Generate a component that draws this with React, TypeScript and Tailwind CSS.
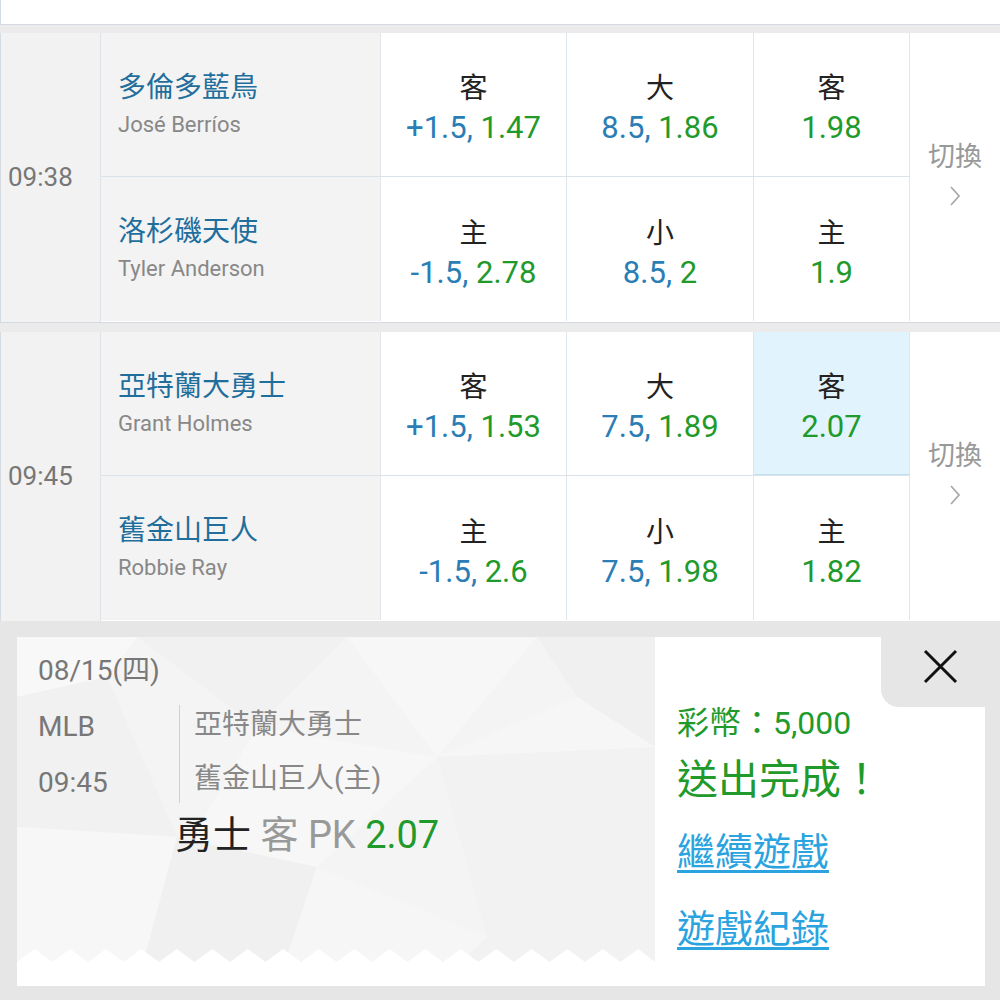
const font = { fontFamily: 'Roboto, "Noto Sans CJK TC", sans-serif' };

type Odd = { label: string; line?: string; odd: string; active?: boolean };
type Team = { name: string; player: string; odds: Odd[] };
type Game = { time: string; teams: Team[] };

const games: Game[] = [
  {
    time: "09:38",
    teams: [
      {
        name: "多倫多藍鳥",
        player: "José Berríos",
        odds: [
          { label: "客", line: "+1.5", odd: "1.47" },
          { label: "大", line: "8.5", odd: "1.86" },
          { label: "客", odd: "1.98" },
        ],
      },
      {
        name: "洛杉磯天使",
        player: "Tyler Anderson",
        odds: [
          { label: "主", line: "-1.5", odd: "2.78" },
          { label: "小", line: "8.5", odd: "2" },
          { label: "主", odd: "1.9" },
        ],
      },
    ],
  },
  {
    time: "09:45",
    teams: [
      {
        name: "亞特蘭大勇士",
        player: "Grant Holmes",
        odds: [
          { label: "客", line: "+1.5", odd: "1.53" },
          { label: "大", line: "7.5", odd: "1.89" },
          { label: "客", odd: "2.07", active: true },
        ],
      },
      {
        name: "舊金山巨人",
        player: "Robbie Ray",
        odds: [
          { label: "主", line: "-1.5", odd: "2.6" },
          { label: "小", line: "7.5", odd: "1.98" },
          { label: "主", odd: "1.82" },
        ],
      },
    ],
  },
];

const oddWidths = ["w-[186px]", "w-[187px]", "w-[156px]"];

function OddCell({ o, i }: { o: Odd; i: number }) {
  return (
    <div
      className={`${oddWidths[i]} flex flex-col items-center justify-center pt-[9px] border-r border-[#dfe6eb] ${
        o.active ? "bg-[#e1f3fd] border-b border-b-[#c3dfee]" : "bg-white"
      }`}
    >
      <div className="text-[28px] leading-[36px] text-[#222]">{o.label}</div>
      <div className="text-[31px] leading-[38px] mt-[2px]">
        {o.line && <span className="text-[#2a7db5]">{o.line}, </span>}
        <span className="text-[#1f9a2b]">{o.odd}</span>
      </div>
    </div>
  );
}

function GameBlock({ g }: { g: Game }) {
  return (
    <div className="flex h-[289px] border-l border-[#d5dde3]">
      <div className="w-[100px] bg-[#f2f2f2] border-r border-[#dde3e8] flex items-center pl-[7px]">
        <span className="text-[26px] text-[#777]">{g.time}</span>
      </div>
      <div className="flex flex-col">
        {g.teams.map((t, idx) => (
          <div
            key={t.name}
            className={`flex h-[144px] ${idx === 0 ? "border-b border-[#dbe3e9]" : ""}`}
          >
            <div className="w-[280px] bg-[#f3f3f3] border-r border-[#e2e6ea] flex flex-col justify-center pl-[17px]">
              <div className="text-[28px] leading-[36px] text-[#1f6e9c]">{t.name}</div>
              <div className="text-[22px] leading-[30px] text-[#888] mt-[4px]">{t.player}</div>
            </div>
            {t.odds.map((o, i) => (
              <OddCell key={i} o={o} i={i} />
            ))}
          </div>
        ))}
      </div>
      <div className="flex-1 bg-white flex flex-col items-center justify-center pb-[8px]">
        <span className="text-[27px] leading-[32px] text-[#999]">切換</span>
        <svg width="14" height="22" viewBox="0 0 14 22" className="mt-[12px]">
          <path d="M3 2 L11 11 L3 20" fill="none" stroke="#aaa" strokeWidth="1.8" />
        </svg>
      </div>
    </div>
  );
}

function Texture() {
  return (
    <svg className="absolute inset-0" width="638" height="349" viewBox="0 0 638 349">
      <rect width="638" height="349" fill="#f4f4f4" />
      <polygon points="0,0 120,0 90,40 0,60" fill="#f8f8f8" />
      <polygon points="120,0 330,0 240,90" fill="#f1f1f1" />
      <polygon points="330,0 520,0 420,120" fill="#f7f7f7" />
      <polygon points="520,0 638,0 638,110 560,60" fill="#f0f0f0" />
      <polygon points="0,60 90,40 160,200 0,190" fill="#f1f1f1" />
      <polygon points="240,90 420,120 300,230 170,210" fill="#f7f7f7" />
      <polygon points="420,120 638,110 638,260 470,300" fill="#f2f2f2" />
      <polygon points="0,190 160,200 120,349 0,349" fill="#f7f7f7" />
      <polygon points="160,200 300,230 260,349 120,349" fill="#f0f0f0" />
      <polygon points="300,230 470,300 420,349 260,349" fill="#f6f6f6" />
      <polygon points="470,300 638,260 638,349 420,349" fill="#f2f2f2" />
      <polygon points="560,60 638,110 420,120" fill="#f6f6f6" />
    </svg>
  );
}

function Zigzag() {
  const pts: string[] = ["0,28"];
  for (let x = 0; x <= 638; x += 35.5) {
    pts.push(`${x},13`);
    pts.push(`${x + 17.75},0`);
  }
  pts.push("638,13", "638,28");
  return (
    <svg className="absolute left-0 bottom-0" width="638" height="37" viewBox="0 0 638 37">
      <rect x="0" y="13" width="638" height="24" fill="#ffffff" />
      <polygon points={pts.join(" ")} fill="#ffffff" />
    </svg>
  );
}

export default function App() {
  return (
    <div className="w-[1000px] h-[1000px] bg-white overflow-hidden" style={font}>
      <div className="h-[24px] border-l border-[#d5dde3] bg-white" />
      <div className="h-[9px] border-t border-[#d4dadf] bg-[#ebebeb]" />
      <GameBlock g={games[0]} />
      <div className="h-[10px] border-t border-[#d4dadf] bg-[#ebebeb]" />
      <GameBlock g={games[1]} />

      <div className="bg-[#e6e6e6] h-[380px] pt-[16px] pl-[17px] pr-[15px]">
        <div className="relative flex h-[349px] bg-white">
          <div className="relative w-[638px] h-full overflow-hidden">
            <Texture />
            <Zigzag />
            <div className="relative pl-[21px] pt-[16px] text-[#777]">
              <div className="text-[28px] leading-[36px]">08/15(四)</div>
              <div className="flex mt-[16px]">
                <div className="w-[142px] border-r border-[#d0d0d0] text-[28px]">
                  <div className="leading-[40px] pt-[2px]">MLB</div>
                  <div className="leading-[40px] mt-[16px]">09:45</div>
                </div>
                <div className="pl-[14px] text-[28px] text-[#888]">
                  <div className="leading-[40px]">亞特蘭大勇士</div>
                  <div className="leading-[40px] mt-[14px]">舊金山巨人(主)</div>
                </div>
              </div>
              <div className="pl-[137px] mt-[10px] text-[38px] leading-[44px]">
                <span className="text-[#222]">勇士</span>{" "}
                <span className="text-[#999]">客 PK</span>{" "}
                <span className="text-[#1f9a2b]">2.07</span>
              </div>
            </div>
          </div>
          <div className="flex-1 pl-[22px] pt-[66px]">
            <div className="text-[32px] leading-[40px] text-[#1f9a2b]">彩幣：5,000</div>
            <div className="text-[41px] leading-[48px] text-[#1f9a2b] mt-[13px]">送出完成！</div>
            <div className="text-[38px] leading-[48px] text-[#2aa3df] underline underline-offset-[5px] decoration-[3px] mt-[24px]">
              繼續遊戲
            </div>
            <div className="text-[38px] leading-[48px] text-[#2aa3df] underline underline-offset-[5px] decoration-[3px] mt-[29px]">
              遊戲紀錄
            </div>
          </div>
          <div className="absolute right-0 top-0 w-[104px] h-[70px] bg-[#e6e6e6] rounded-bl-[18px] flex items-start justify-end pt-[12px] pr-[27px]">
            <svg width="35" height="35" viewBox="0 0 35 35">
              <path d="M2 2 L33 33 M33 2 L2 33" stroke="#111" strokeWidth="3" />
            </svg>
          </div>
        </div>
      </div>
    </div>
  );
}
